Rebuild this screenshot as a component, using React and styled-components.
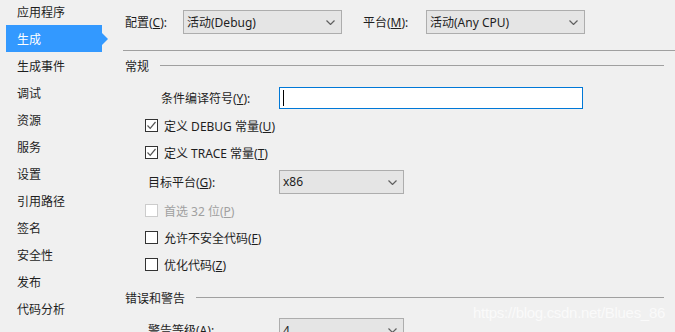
import React from 'react';
import styled, { createGlobalStyle } from 'styled-components';

const GlobalStyle = createGlobalStyle`
  html, body {
    margin: 0;
    padding: 0;
    background: #f0f0f0;
    overflow: hidden;
  }
  body {
    font-family: "Noto Sans", "Noto Sans CJK SC", sans-serif;
    font-size: 12px;
    color: #1e1e1e;
  }
`;

const Page = styled.div`
  position: relative;
  display: flex;
  width: 675px;
  height: 332px;
  overflow: hidden;
  background: #f0f0f0;
`;

const Sidebar = styled.ul`
  list-style: none;
  margin: -2px 0 0 0;
  padding: 0 0 0 6px;
  width: 117px;
  flex: none;
`;

const NavItem = styled.li`
  position: relative;
  width: 96px;
  height: 27px;
  display: flex;
  align-items: center;
  padding-left: 11px;
  box-sizing: border-box;
  background: ${p => (p.$active ? '#3399ff' : 'transparent')};
  color: ${p => (p.$active ? '#ffffff' : '#1e1e1e')};

  &::after {
    content: '';
    display: ${p => (p.$active ? 'block' : 'none')};
    position: absolute;
    right: -6px;
    top: 8px;
    border-left: 6px solid #3399ff;
    border-top: 6px solid transparent;
    border-bottom: 6px solid transparent;
  }
`;

const Main = styled.div`
  flex: 1;
  display: flex;
  flex-direction: column;
  & > * {
    flex: none;
  }
`;

const TopBar = styled.div`
  display: flex;
  align-items: center;
  padding: 10px 0 0 2px;
  height: 24px;
`;

const Label = styled.span`
  width: ${p => p.$w}px;
  margin-left: ${p => p.$ml || 0}px;
  flex: none;
  white-space: nowrap;
`;

const Select = styled.div`
  position: relative;
  width: ${p => p.$w}px;
  height: 24px;
  box-sizing: border-box;
  border: 1px solid #adadad;
  background: #e5e5e5;
  display: flex;
  align-items: center;
  padding-left: 3px;
  flex: none;
`;

const Chevron = styled.svg`
  position: absolute;
  right: 6px;
  top: 9px;
`;

const Rule = styled.div`
  height: 1px;
  background: #a0a0a0;
  margin-top: 16px;
`;

const SectionHeader = styled.div`
  display: flex;
  align-items: center;
  height: ${p => p.$h}px;
  margin-top: ${p => p.$mt || 0}px;
  padding: 0 11px 0 2px;
`;

const SectionLine = styled.div`
  flex: 1;
  height: 1px;
  background: #a0a0a0;
  margin-left: 11px;
  margin-top: -1px;
`;

const Row = styled.div`
  display: flex;
  align-items: center;
  height: ${p => p.$h}px;
  margin-top: ${p => p.$mt || 0}px;
  padding-left: ${p => p.$pl}px;
  color: ${p => (p.$disabled ? '#a0a0a0' : '#1e1e1e')};
`;

const TextInput = styled.div`
  width: 304px;
  height: 22px;
  box-sizing: border-box;
  border: 1px solid #0078d7;
  background: #ffffff;
  display: flex;
  align-items: center;
  padding-left: 3px;
  flex: none;
`;

const Caret = styled.span`
  width: 1px;
  height: 16px;
  background: #000;
`;

const Box = styled.span`
  width: 13px;
  height: 13px;
  box-sizing: border-box;
  border: 1px solid ${p => (p.$disabled ? '#cccccc' : '#333333')};
  background: #ffffff;
  margin-right: 6px;
  display: flex;
  align-items: center;
  justify-content: center;
  flex: none;
`;

const Watermark = styled.span`
  position: absolute;
  right: 10px;
  top: 304px;
  font-family: "Liberation Sans", Arial, sans-serif;
  font-size: 15px;
  color: #fafafa;
  letter-spacing: -0.3px;
`;

const navItems = ['应用程序', '生成', '生成事件', '调试', '资源', '服务', '设置', '引用路径', '签名', '安全性', '发布', '代码分析'];

const Arrow = () => (
  <Chevron width="9" height="5" viewBox="0 0 9 5">
    <path d="M0.5 0.5 L4.5 4.5 L8.5 0.5" fill="none" stroke="#606060" strokeWidth="1.2" />
  </Chevron>
);

const Dropdown = ({ w, children }) => (
  <Select $w={w}>
    {children}
    <Arrow />
  </Select>
);

const Check = ({ checked, disabled, children }) => (
  <Row $h={27} $pl={22} $disabled={disabled}>
    <Box $disabled={disabled}>
      {checked && (
        <svg width="11" height="11" viewBox="0 0 11 11">
          <path d="M1.5 5.5 L4.2 8.3 L9.5 2" fill="none" stroke="#555" strokeWidth="1.2" />
        </svg>
      )}
    </Box>
    <span>{children}</span>
  </Row>
);

export default function App() {
  return (
    <Page>
      <GlobalStyle />
      <Sidebar>
        {navItems.map(n => (
          <NavItem key={n} $active={n === '生成'}>{n}</NavItem>
        ))}
      </Sidebar>
      <Main>
        <TopBar>
          <Label $w={58}>配置(<u>C</u>):</Label>
          <Dropdown w={159}>活动(Debug)</Dropdown>
          <Label $w={63} $ml={21}>平台(<u>M</u>):</Label>
          <Dropdown w={159}>活动(Any CPU)</Dropdown>
        </TopBar>
        <Rule />
        <SectionHeader $h={30}>
          常规
          <SectionLine />
        </SectionHeader>
        <Row $h={28} $mt={3} $pl={38}>
          <Label $w={118}>条件编译符号(<u>Y</u>):</Label>
          <TextInput><Caret /></TextInput>
        </Row>
        <Check checked>定义 DEBUG 常量(<u>U</u>)</Check>
        <Check checked>定义 TRACE 常量(<u>T</u>)</Check>
        <Row $h={31} $pl={25}>
          <Label $w={131}>目标平台(<u>G</u>):</Label>
          <Dropdown w={125}>x86</Dropdown>
        </Row>
        <Check disabled>首选 32 位(<u>P</u>)</Check>
        <Check>允许不安全代码(<u>F</u>)</Check>
        <Check>优化代码(<u>Z</u>)</Check>
        <SectionHeader $h={32} $mt={4}>
          错误和警告
          <SectionLine />
        </SectionHeader>
        <Row $h={32} $pl={25}>
          <Label $w={131}>警告等级(<u>A</u>):</Label>
          <Dropdown w={125}>4</Dropdown>
        </Row>
      </Main>
      <Watermark>https://blog.csdn.net/Blues_86</Watermark>
    </Page>
  );
}
